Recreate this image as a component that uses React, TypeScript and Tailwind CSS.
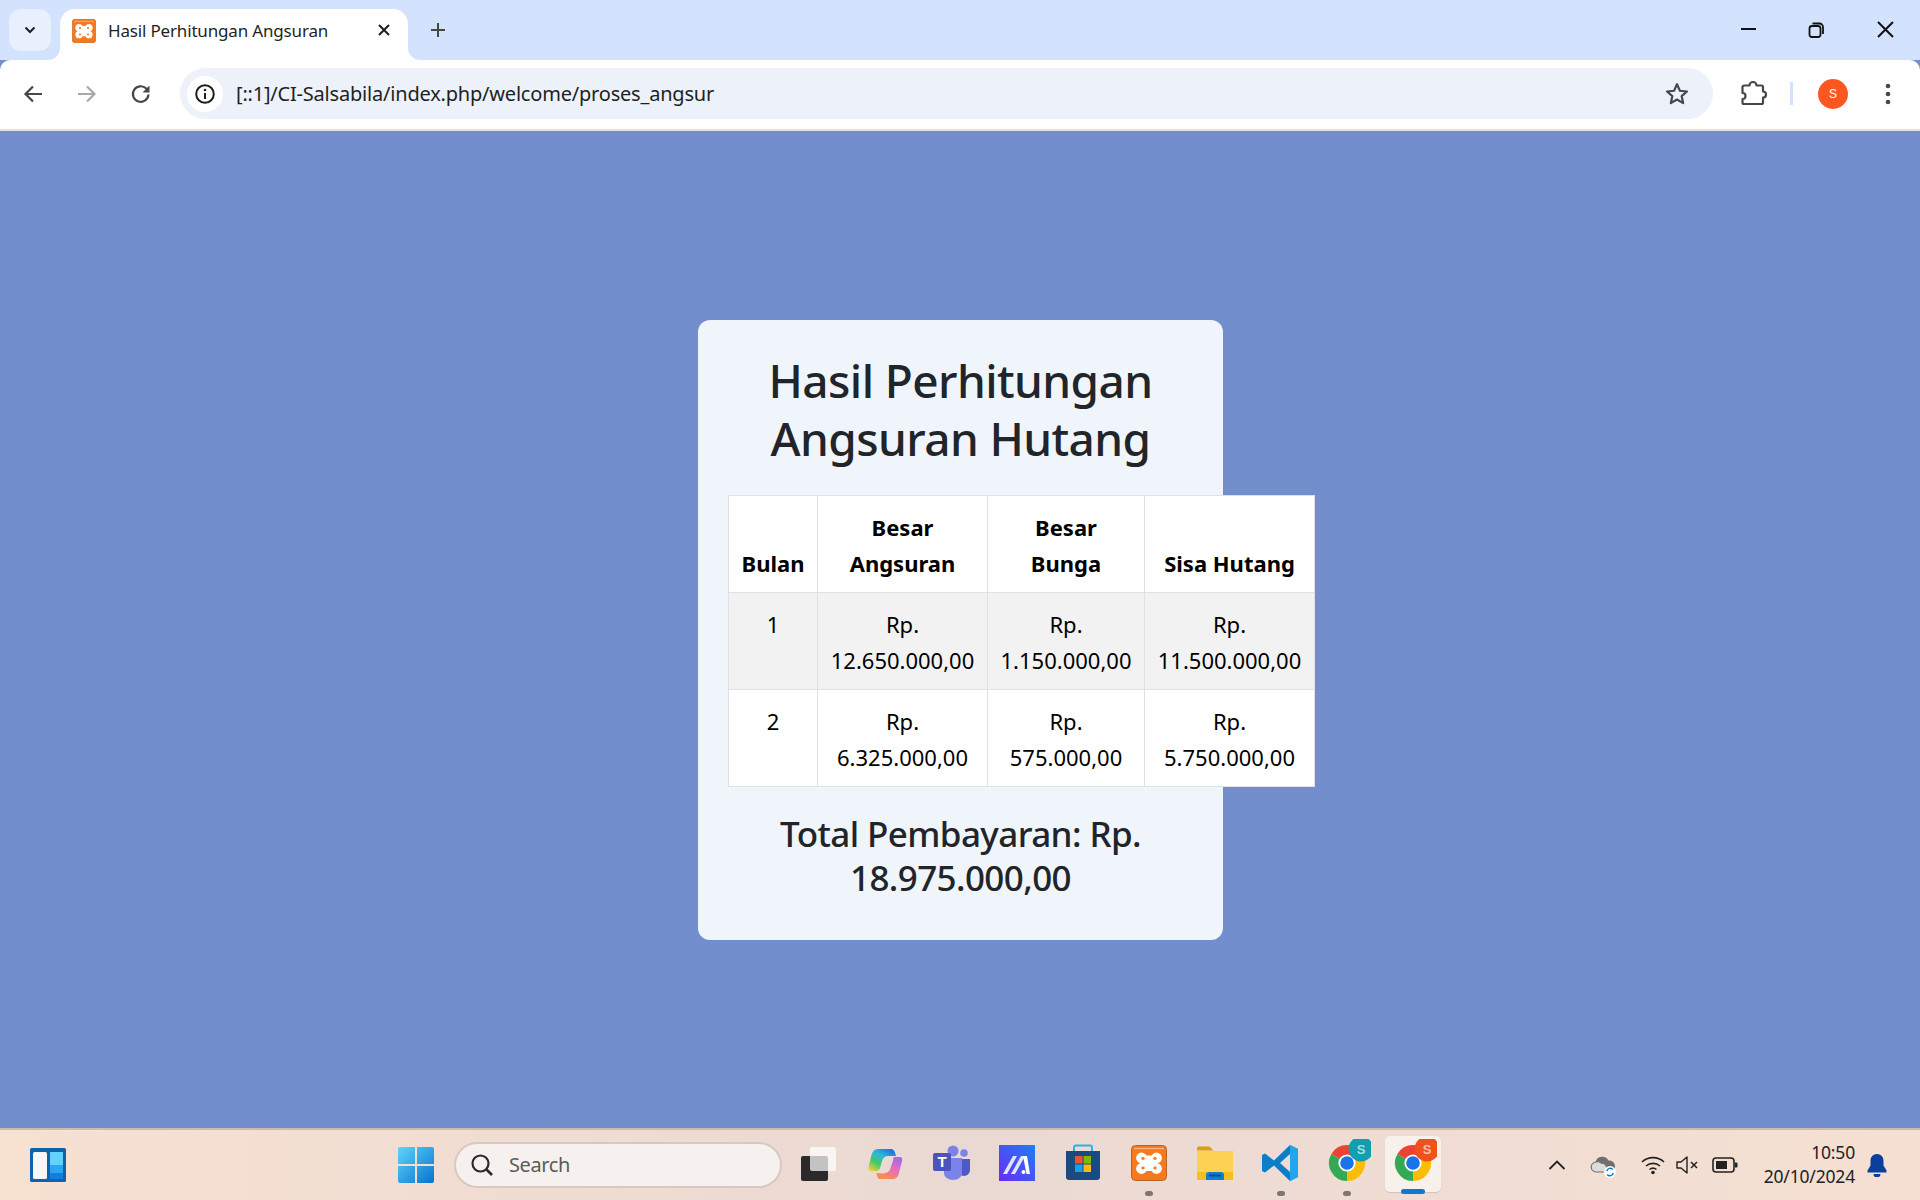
import React from "react";

function Chrome({ badge, letter }: { badge: string; letter: string }) {
  return (
    <svg width="48" height="48" viewBox="0 0 48 48">
      <path d="M24 24 L8.4 15 A18 18 0 0 1 39.6 15 Z" fill="#ea4335" />
      <path d="M24 24 L39.6 15 A18 18 0 0 1 24 42 Z" fill="#fbbc04" />
      <path d="M24 24 L24 42 A18 18 0 0 1 8.4 15 Z" fill="#34a853" />
      <circle cx="24" cy="24" r="8.6" fill="#fff" />
      <circle cx="24" cy="24" r="6.8" fill="#1a73e8" />
      <circle cx="38" cy="10" r="12.5" fill={badge} />
      <text x="38" y="14.5" textAnchor="middle" fontSize="13" fontWeight="700" fill="#ffffff" fillOpacity="0.65" fontFamily="Liberation Sans, sans-serif">{letter}</text>
    </svg>
  );
}

function Xampp({ size }: { size: number }) {
  return (
    <svg width={size} height={size} viewBox="0 0 36 36">
      <rect x="0.5" y="0.5" width="35" height="35" rx="4" fill="#f6791e" stroke="#b9642a" />
      <path d="M3 3.500h30" stroke="#fbb27d" strokeWidth="1.400" />
      <circle cx="10.500" cy="13" r="5.400" fill="#fff" />
      <circle cx="25.500" cy="13" r="5.400" fill="#fff" />
      <circle cx="10.500" cy="23.500" r="5.400" fill="#fff" />
      <circle cx="25.500" cy="23.500" r="5.400" fill="#fff" />
      <rect x="11" y="10.500" width="14" height="15.500" fill="#fff" />
      <ellipse cx="12" cy="13.500" rx="1.700" ry="1.400" fill="#f6791e" />
      <ellipse cx="24" cy="13.500" rx="1.700" ry="1.400" fill="#f6791e" />
      <ellipse cx="12" cy="23" rx="1.700" ry="1.400" fill="#f6791e" />
      <ellipse cx="24" cy="23" rx="1.700" ry="1.400" fill="#f6791e" />
    </svg>
  );
}

function App() {
  const cell = "border border-[#dee2e6] px-3 pt-[13px] pb-[11px] text-center align-top";
  const head = "border border-[#dee2e6] px-3 pt-[13px] pb-[11px] text-center align-bottom font-bold";
  return (
    <div className="w-[1920px] h-[1200px] overflow-hidden flex flex-col bg-[#728ecd] font-['Noto_Sans','Open_Sans',sans-serif]">
      {/* tab strip */}
      <div className="h-[60px] shrink-0 bg-[#d3e3fd] flex items-start">
        <div className="ml-[9px] mt-[9px] w-[42px] h-[42px] rounded-[12px] bg-[#e8f0fe] flex items-center justify-center">
          <svg width="16" height="16" viewBox="0 0 16 16"><path d="M3.500 5.500 8 10l4.500-4.500" fill="none" stroke="#1f1f1f" strokeWidth="2" /></svg>
        </div>
        <div className="relative ml-[9px] mt-[9px] w-[348px] h-[51px] bg-white rounded-t-[15px] flex items-center pl-[12px] pb-[8px]">
          <svg className="absolute left-[-12px] bottom-0" width="12" height="12" viewBox="0 0 12 12"><path d="M12 0v12H0A12 12 0 0 0 12 0z" fill="#fff" /></svg>
          <svg className="absolute right-[-12px] bottom-0" width="12" height="12" viewBox="0 0 12 12"><path d="M0 0v12h12A12 12 0 0 1 0 0z" fill="#fff" /></svg>
          <Xampp size={24} />
          <span className="ml-[12px] text-[17px] text-[#1f1f1f] tracking-[-0.01em] whitespace-nowrap">Hasil Perhitungan Angsuran</span>
          <svg className="absolute right-[16px] top-[13px]" width="16" height="16" viewBox="0 0 16 16"><path d="M3 3l10 10M13 3 3 13" stroke="#1f1f1f" strokeWidth="2" /></svg>
        </div>
        <svg className="ml-[21px] mt-[21px]" width="18" height="18" viewBox="0 0 18 18"><path d="M9 2v14M2 9h14" stroke="#444746" strokeWidth="2" /></svg>
        <div className="flex-1" />
        <div className="flex items-center h-[58px]">
          <svg width="68" height="58" viewBox="0 0 68 58"><path d="M27 29h15" stroke="#111" strokeWidth="2" /></svg>
          <svg width="68" height="58" viewBox="0 0 68 58"><rect x="27.500" y="26" width="11" height="11" rx="2.500" fill="none" stroke="#111" strokeWidth="1.800" /><path d="M30.500 23.500h7a3.500 3.500 0 0 1 3.500 3.500v7" fill="none" stroke="#111" strokeWidth="1.800" /></svg>
          <svg width="69" height="58" viewBox="0 0 69 58" className="mr-[1px]"><path d="M28 22l15 15M43 22 28 37" stroke="#111" strokeWidth="2" /></svg>
        </div>
      </div>
      {/* toolbar */}
      <div className="h-[71px] shrink-0 bg-white border-b-2 border-[#e1e1e1] rounded-t-[10px] flex items-center pb-[2px]">
        <svg className="ml-[21px]" width="24" height="24" viewBox="0 0 24 24"><path d="M21 12H5M12 4.500 4.500 12l7.500 7.500" fill="none" stroke="#474747" strokeWidth="2.200" /></svg>
        <svg className="ml-[30px]" width="24" height="24" viewBox="0 0 24 24"><path d="M3 12h16M12 4.500l7.500 7.500-7.500 7.500" fill="none" stroke="#a9a9a9" strokeWidth="2.200" /></svg>
        <svg className="ml-[30px]" width="24" height="24" viewBox="0 0 24 24"><path d="M19.500 12.500a7.800 7.800 0 1 1-2.300-6l2.300 2.400" fill="none" stroke="#474747" strokeWidth="2.200" /><path d="M20.500 3.500v7h-7z" fill="#474747" /></svg>
        <div className="ml-[27px] w-[1533px] h-[51px] rounded-full bg-[#ecf1fa] flex items-center pl-[7px]">
          <div className="w-[36px] h-[36px] rounded-full bg-white flex items-center justify-center">
            <svg width="22" height="22" viewBox="0 0 22 22"><circle cx="11" cy="11" r="8.800" fill="none" stroke="#1f1f1f" strokeWidth="2" /><path d="M11 10v6" stroke="#1f1f1f" strokeWidth="2" /><circle cx="11" cy="7" r="1.300" fill="#1f1f1f" /></svg>
          </div>
          <span className="ml-[13px] pt-[1px] text-[20px] text-[#1f1f1f] tracking-[-0.01em] whitespace-nowrap">[::1]/CI-Salsabila/index.php/welcome/proses_angsur</span>
          <div className="flex-1" />
          <svg className="mr-[23px]" width="26" height="26" viewBox="0 0 24 24"><path d="M12 3l2.700 6 6.500.7-4.900 4.300 1.400 6.400L12 17.100 6.300 20.400l1.400-6.400-4.900-4.300 6.500-.7z" fill="none" stroke="#474747" strokeWidth="2" strokeLinejoin="round" /></svg>
        </div>
        <svg className="ml-[26px]" width="28" height="28" viewBox="0 0 28 28"><path d="M3 7.500a1.500 1.500 0 0 1 1.500-1.500h5.500a3.500 3.500 0 0 1 7 0h5a1.500 1.500 0 0 1 1.500 1.500v4.500a3 3 0 0 1 0 6v5a1.500 1.500 0 0 1-1.500 1.500H4.500A1.500 1.500 0 0 1 3 23v-3.500a3 3 0 0 0 0-6z" transform="translate(0.500 -0.500)" fill="none" stroke="#474747" strokeWidth="2.200" strokeLinejoin="round" /></svg>
        <div className="ml-[23px] w-[3px] h-[23px] bg-[#d3e3fd]" />
        <div className="ml-[25px] w-[30px] h-[30px] rounded-full bg-[#fc5621] flex items-center justify-center text-[12px] text-white font-['Liberation_Sans',sans-serif]">S</div>
        <svg className="ml-[37px]" width="6" height="24" viewBox="0 0 6 24"><circle cx="3" cy="4" r="2.300" fill="#474747" /><circle cx="3" cy="12" r="2.300" fill="#474747" /><circle cx="3" cy="20" r="2.300" fill="#474747" /></svg>
      </div>
      {/* page */}
      <main className="flex-1 min-h-0 pl-[698px] pt-[189px]">
        <div className="w-[525px] h-[620px] bg-[#f0f4fb] rounded-[12px] px-[30px] pt-[31px]">
          <h2 className="text-[#212529] text-[46px] leading-[58px] font-medium text-center tracking-[-0.013em] mb-[28px] whitespace-pre-line">{"Hasil Perhitungan\nAngsuran Hutang"}</h2>
          <table className="border-collapse bg-white text-[22px] leading-[36px] text-black table-fixed w-[586px]">
            <colgroup>
              <col className="w-[89px]" />
              <col className="w-[170px]" />
              <col className="w-[157px]" />
              <col className="w-[170px]" />
            </colgroup>
            <thead>
              <tr>
                <th className={head}>Bulan</th>
                <th className={head}>Besar Angsuran</th>
                <th className={head}>Besar Bunga</th>
                <th className={head}>Sisa Hutang</th>
              </tr>
            </thead>
            <tbody>
              <tr className="bg-[#f2f2f2]">
                <td className={cell}>1</td>
                <td className={cell}>Rp. 12.650.000,00</td>
                <td className={cell}>Rp. 1.150.000,00</td>
                <td className={cell}>Rp. 11.500.000,00</td>
              </tr>
              <tr>
                <td className={cell}>2</td>
                <td className={cell}>Rp. 6.325.000,00</td>
                <td className={cell}>Rp. 575.000,00</td>
                <td className={cell}>Rp. 5.750.000,00</td>
              </tr>
            </tbody>
          </table>
          <h4 className="mt-[25px] text-[#212529] text-[35px] leading-[44px] font-medium text-center tracking-[-0.017em] whitespace-pre-line">{"Total Pembayaran: Rp.\n18.975.000,00"}</h4>
        </div>
      </main>
      {/* taskbar */}
      <footer className="h-[72px] shrink-0 border-t-2 border-[#cdb9ae] bg-gradient-to-r from-[#f7e1d1] via-[#ead9d3] to-[#f6e0d3] flex items-center">
        <svg className="ml-[30px]" width="36" height="34" viewBox="0 0 36 34">
          <rect width="36" height="34" rx="1.500" fill="#0f62ad" />
          <rect x="3" y="4" width="14" height="27" rx="1.500" fill="#f7f7f7" />
          <rect x="20" y="4" width="13" height="13" fill="#62d3fc" />
          <rect x="20" y="17" width="13" height="8" fill="#2aa5f2" />
          <rect x="20" y="25" width="13" height="6" fill="#0f7fdc" />
        </svg>
        <svg className="ml-[332px]" width="36" height="36" viewBox="0 0 36 36">
          <defs>
            <linearGradient id="win" x1="0" y1="0" x2="1" y2="1"><stop offset="0" stopColor="#5fd4fb" /><stop offset="1" stopColor="#0673cf" /></linearGradient>
          </defs>
          <path d="M2 0h15v17H0V2a2 2 0 0 1 2-2zM19 0h15a2 2 0 0 1 2 2v15H19zM0 19h17v17H2a2 2 0 0 1-2-2zM19 19h17v15a2 2 0 0 1-2 2H19z" fill="url(#win)" />
        </svg>
        <div className="ml-[20px] w-[328px] h-[46px] rounded-full bg-[#f6f1ee] border-2 border-[#d9c8c1] flex items-center pl-[14px]">
          <svg width="24" height="24" viewBox="0 0 24 24"><circle cx="10.500" cy="10.500" r="8" fill="none" stroke="#2a2a2a" strokeWidth="2.200" /><path d="M16.500 16.500l5.500 5.500" stroke="#2a2a2a" strokeWidth="2.600" /></svg>
          <span className="ml-[15px] text-[20px] text-[#5a5a5a] tracking-[-0.02em]">Search</span>
        </div>
        <div className="ml-[4px] flex items-center">
          <div className="relative w-[66px] h-[70px] flex items-center justify-center pb-[4px]">
            <svg width="48" height="48" viewBox="0 0 48 48">
              <rect x="6" y="17" width="27" height="25" rx="2" fill="#2a2a2a" />
              <rect x="15" y="8" width="26" height="24" rx="2" fill="#ffffff" fillOpacity="0.72" />
            </svg>
          </div>
          <div className="relative w-[66px] h-[70px] flex items-center justify-center pb-[4px]">
            <svg width="48" height="48" viewBox="0 0 48 48">
              <defs>
                <linearGradient id="cop1" x1="0.800" y1="0" x2="0.100" y2="1"><stop offset="0" stopColor="#1b6fe0" /><stop offset="0.350" stopColor="#2fb8d8" /><stop offset="0.650" stopColor="#3fc86a" /><stop offset="1" stopColor="#f2d23a" /></linearGradient>
                <linearGradient id="cop2" x1="0.800" y1="0" x2="0.300" y2="1"><stop offset="0" stopColor="#9a6cf0" /><stop offset="0.500" stopColor="#e86fb4" /><stop offset="1" stopColor="#f8904a" /></linearGradient>
              </defs>
              <path d="M17 10h13c3 0 4 3 5 7h-8c-3 0-5 2-6 5l-2 7c-.500 2-2 3-4 3h-5c-2 0-3-2-2.500-4l3-12c1-4 3-6 6.500-6z" fill="url(#cop1)" />
              <path d="M33 18h6c2 0 2.500 2 2 4l-3 12c-1 4-3 6-6.500 6H19c-2 0-3-2-3.500-6l6 .500c1.500 0 6-.500 7.500-4l3-9c.500-2 .500-3.500 1-3.500z" fill="url(#cop2)" />
            </svg>
          </div>
          <div className="relative w-[66px] h-[70px] flex items-center justify-center pb-[4px]">
            <svg width="48" height="48" viewBox="0 0 48 48">
              <circle cx="37" cy="14" r="3.800" fill="#7b83eb" />
              <path d="M31 20h12v11c0 3-3 6-6 6s-6-3-6-6z" fill="#5059c9" />
              <circle cx="26" cy="12" r="5.500" fill="#7b83eb" />
              <path d="M17 19h18v15c0 4-4 7-9 7s-9-3-9-7z" fill="#7b83eb" />
              <rect x="6" y="14" width="18" height="18" rx="2" fill="#4b53bc" />
              <text x="15" y="28" textAnchor="middle" fontSize="15" fontWeight="700" fill="#fff" fontFamily="Liberation Sans, sans-serif">T</text>
            </svg>
          </div>
          <div className="relative w-[66px] h-[70px] flex items-center justify-center pb-[4px]">
            <svg width="48" height="48" viewBox="0 0 48 48">
              <defs>
                <linearGradient id="ma" x1="0" y1="1" x2="1" y2="0"><stop offset="0" stopColor="#6a2cf6" /><stop offset="1" stopColor="#1f7ef2" /></linearGradient>
              </defs>
              <rect x="6" y="6" width="36" height="36" fill="url(#ma)" />
              <path d="M10 35 20 17h4L14 35zM18 35 28 17h4L22 35z" fill="#dfe6ff" />
              <path d="M30 17h4l3 18h-3.500z" fill="#ffffff" />
              <circle cx="30.500" cy="33" r="2" fill="#fff" />
            </svg>
          </div>
          <div className="relative w-[66px] h-[70px] flex items-center justify-center pb-[4px]">
            <svg width="48" height="48" viewBox="0 0 48 48">
              <path d="M15 12V8.500a2 2 0 0 1 2-2h14a2 2 0 0 1 2 2V12" fill="none" stroke="#2bb1ea" strokeWidth="2" />
              <path d="M7 12h34v26a3 3 0 0 1-3 3H10a3 3 0 0 1-3-3z" fill="#1a4a80" />
              <rect x="16" y="17" width="7.500" height="7.500" fill="#f0532a" />
              <rect x="24.500" y="17" width="7.500" height="7.500" fill="#7fba00" />
              <rect x="16" y="25.500" width="7.500" height="7.500" fill="#14a3ea" />
              <rect x="24.500" y="25.500" width="7.500" height="7.500" fill="#fdb813" />
            </svg>
          </div>
          <div className="relative w-[66px] h-[70px] flex items-center justify-center pb-[4px]">
            <Xampp size={36} />
            <div className="absolute bottom-[4px] left-[29px] w-[8px] h-[5px] rounded-full bg-[#7d7673]" />
          </div>
          <div className="relative w-[66px] h-[70px] flex items-center justify-center pb-[4px]">
            <svg width="48" height="48" viewBox="0 0 48 48">
              <path d="M6 9a1.500 1.500 0 0 1 1.500-1.500h11l4 4H6z" fill="#e0a100" />
              <path d="M6 12h36v28a1 1 0 0 1-1 1H7a1 1 0 0 1-1-1z" fill="#fdd253" />
              <path d="M6 33h36v7a1 1 0 0 1-1 1H7a1 1 0 0 1-1-1z" fill="#f6bf21" />
              <path d="M15 41v-5a3 3 0 0 1 3-3h12a3 3 0 0 1 3 3v5z" fill="#0f7fd0" />
              <path d="M18 36.500h12" stroke="#0b4f8e" strokeWidth="2" />
            </svg>
          </div>
          <div className="relative w-[66px] h-[70px] flex items-center justify-center pb-[4px]">
            <svg width="48" height="48" viewBox="0 0 48 48">
              <path d="M33 6 41 10v28l-8 4-16-15.500-9 7L5 32v-16l3-1.500 9 7zM33 15l-10 9 10 9z" fill="#0a7fc8" />
              <path d="M33 6l8 4v28l-8 4z" fill="#20a5ee" />
            </svg>
            <div className="absolute bottom-[4px] left-[29px] w-[8px] h-[5px] rounded-full bg-[#7d7673]" />
          </div>
          <div className="relative w-[66px] h-[70px] flex items-center justify-center pb-[4px]">
            <Chrome badge="#139eaf" letter="S" />
            <div className="absolute bottom-[4px] left-[29px] w-[8px] h-[5px] rounded-full bg-[#7d7673]" />
          </div>
          <div className="relative w-[66px] h-[70px] flex items-center justify-center pb-[4px]">
            <div className="absolute left-[5px] top-[6px] w-[56px] h-[56px] rounded-[5px] bg-[#f8f0eb] shadow-[0_1px_1px_rgba(0,0,0,0.12)]" />
            <div className="relative"><Chrome badge="#f1511b" letter="S" /></div>
            <div className="absolute bottom-[6px] left-[21px] w-[24px] h-[5px] rounded-full bg-[#0a78d4]" />
          </div>
        </div>
        <svg className="ml-[102px]" width="18" height="12" viewBox="0 0 18 12"><path d="M1.500 10 9 2.500 16.500 10" fill="none" stroke="#222" strokeWidth="1.800" /></svg>
        <svg className="ml-[24px]" width="26" height="26" viewBox="0 0 26 26">
          <path d="M6 20a5 5 0 0 1-.5-10 7 7 0 0 1 13-1.500A5 5 0 0 1 20 20z" fill="#6f6f6f" />
          <path d="M6.500 20a5 5 0 0 1-.5-10 5 5 0 0 1 5.500 1.500c4-1 5 3 6 8.500z" fill="#dcdcdc" stroke="#6f6f6f" strokeWidth="1" />
          <circle cx="20" cy="20" r="6" fill="#fff" />
          <path d="M16.800 19a3.400 3.400 0 0 1 6-1.500M23.200 21a3.400 3.400 0 0 1-6 1.500" fill="none" stroke="#0a78d4" strokeWidth="1.400" />
        </svg>
        <svg className="ml-[24px]" width="26" height="20" viewBox="0 0 26 20"><path d="M2 7a16 16 0 0 1 22 0M6 11a10.500 10.500 0 0 1 14 0M9.500 14.500a5.500 5.500 0 0 1 7 0" fill="none" stroke="#222" strokeWidth="1.600" /><circle cx="13" cy="17.500" r="1.800" fill="#222" /></svg>
        <svg className="ml-[10px]" width="24" height="20" viewBox="0 0 24 20"><path d="M1 7h4l6-5v16l-6-5H1z" fill="none" stroke="#222" strokeWidth="1.400" strokeLinejoin="round" /><path d="M15 7l6 6M21 7l-6 6" stroke="#222" strokeWidth="1.500" /></svg>
        <svg className="ml-[12px]" width="26" height="18" viewBox="0 0 26 18"><rect x="1" y="2" width="21" height="14" rx="3" fill="none" stroke="#222" strokeWidth="1.600" /><rect x="4" y="5" width="11" height="8" fill="#222" /><path d="M23 6.500h1.500a1 1 0 0 1 1 1v3a1 1 0 0 1-1 1H23z" fill="#222" /></svg>
        <div className="ml-[17px] w-[100px] text-right text-[#222] text-[17.500px] leading-[24px] tracking-[-0.01em] pb-[2px]">
          <div>10:50</div>
          <div className="whitespace-nowrap">20/10/2024</div>
        </div>
        <svg className="ml-[11px]" width="22" height="24" viewBox="0 0 22 24"><path d="M11 1c-4 0-6.500 3-6.500 7v4.500L1.500 17.500v2h19v-2l-3-5V8c0-4-2.500-7-6.500-7z" fill="#0b3f9e" /><path d="M7.500 21h7a3.500 3.500 0 0 1-7 0z" fill="#0b3f9e" /></svg>
      </footer>
    </div>
  );
}

export default App;
